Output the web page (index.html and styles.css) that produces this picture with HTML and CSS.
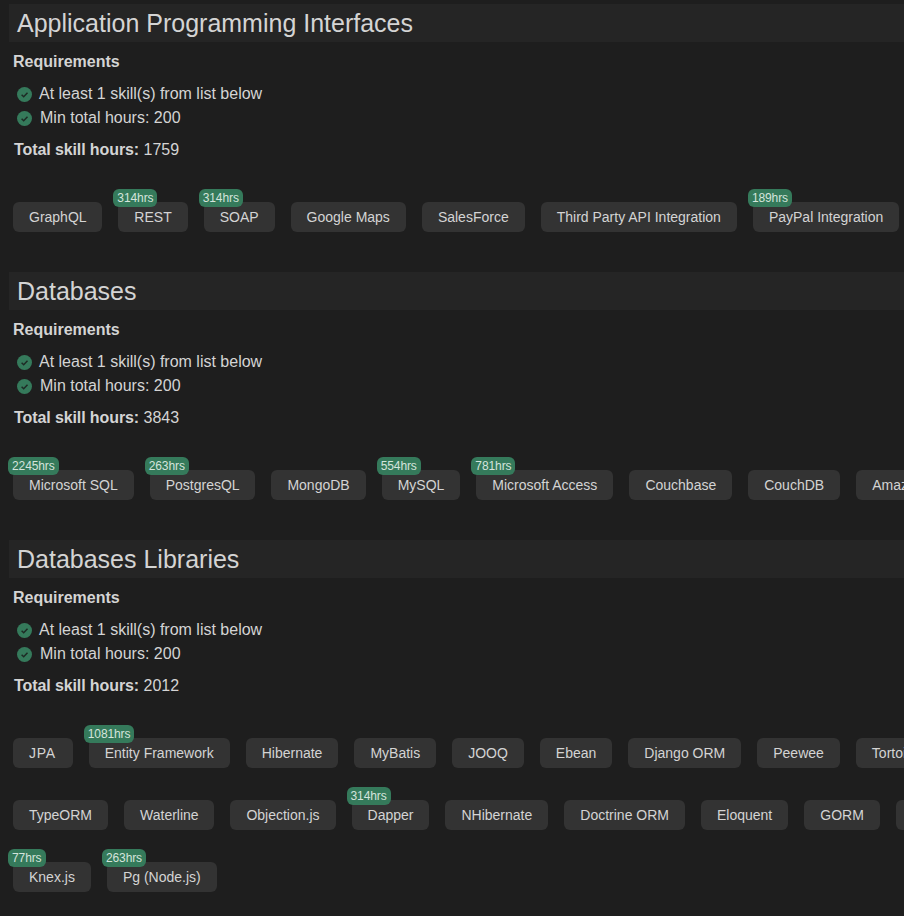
FILE: index.html
```html
<!DOCTYPE html>
<html lang="en">
<head>
  <meta charset="UTF-8">
  <title>Skills</title>
  <link rel="stylesheet" href="styles.css">
</head>
<body>
  <svg class="defs" width="0" height="0">
    <symbol id="check" viewBox="0 0 15 15">
      <circle cx="7.5" cy="7.5" r="7.5" fill="#357a5b"/>
      <path d="M4.6 7.7l2.1 2.1 3.8-4" fill="none" stroke="#1e2a25" stroke-width="1.5"/>
    </symbol>
  </svg>

  <div class="page">
    <section class="group">
      <h2>Application Programming Interfaces</h2>
      <h4>Requirements</h4>
      <ul class="reqs">
        <li><svg class="tick"><use href="#check"/></svg>At least 1 skill(s) from list below</li>
        <li><svg class="tick"><use href="#check"/></svg>Min total hours: 200</li>
      </ul>
      <p class="total"><b>Total skill hours:</b> 1759</p>
      <div class="chips">
        <span class="chip tight">GraphQL</span>
        <span class="chip">REST<span class="hrs">314hrs</span></span>
        <span class="chip">SOAP<span class="hrs">314hrs</span></span>
        <span class="chip">Google Maps</span>
        <span class="chip">SalesForce</span>
        <span class="chip">Third Party API Integration</span>
        <span class="chip">PayPal Integration<span class="hrs">189hrs</span></span>
      </div>
    </section>

    <section class="group">
      <h2>Databases</h2>
      <h4>Requirements</h4>
      <ul class="reqs">
        <li><svg class="tick"><use href="#check"/></svg>At least 1 skill(s) from list below</li>
        <li><svg class="tick"><use href="#check"/></svg>Min total hours: 200</li>
      </ul>
      <p class="total"><b>Total skill hours:</b> 3843</p>
      <div class="chips">
        <span class="chip">Microsoft SQL<span class="hrs">2245hrs</span></span>
        <span class="chip tight">PostgresQL<span class="hrs">263hrs</span></span>
        <span class="chip">MongoDB</span>
        <span class="chip">MySQL<span class="hrs">554hrs</span></span>
        <span class="chip">Microsoft Access<span class="hrs">781hrs</span></span>
        <span class="chip">Couchbase</span>
        <span class="chip">CouchDB</span>
        <span class="chip">Amazon RDS</span>
      </div>
    </section>

    <section class="group">
      <h2>Databases Libraries</h2>
      <h4>Requirements</h4>
      <ul class="reqs">
        <li><svg class="tick"><use href="#check"/></svg>At least 1 skill(s) from list below</li>
        <li><svg class="tick"><use href="#check"/></svg>Min total hours: 200</li>
      </ul>
      <p class="total"><b>Total skill hours:</b> 2012</p>
      <div class="chips">
        <span class="chip wide">JPA</span>
        <span class="chip">Entity Framework<span class="hrs">1081hrs</span></span>
        <span class="chip">Hibernate</span>
        <span class="chip">MyBatis</span>
        <span class="chip">JOOQ</span>
        <span class="chip">Ebean</span>
        <span class="chip">Django ORM</span>
        <span class="chip">Peewee</span>
        <span class="chip">Tortoise ORM</span>
        <span class="chip">TypeORM</span>
        <span class="chip tight">Waterline</span>
        <span class="chip">Objection.js</span>
        <span class="chip">Dapper<span class="hrs">314hrs</span></span>
        <span class="chip">NHibernate</span>
        <span class="chip">Doctrine ORM</span>
        <span class="chip">Eloquent</span>
        <span class="chip">GORM</span>
        <span class="chip">Sequelize</span>
        <span class="chip">Knex.js<span class="hrs">77hrs</span></span>
        <span class="chip">Pg (Node.js)<span class="hrs">263hrs</span></span>
      </div>
    </section>
  </div>
</body>
</html>
```

FILE: styles.css
```css
html, body { margin: 0; height: 916px; overflow: hidden; background: #1e1e1e; }
body { font-family: "Liberation Sans", Arial, sans-serif; font-size: 16px; color: #d4d4d4; }
.defs { position: absolute; }
.page { width: 1000px; padding: 4px 0 0 9px; }
.group { margin-bottom: 40px; }
h2 { margin: 0; height: 38px; line-height: 39px; padding-left: 8px; background: #252525; font-size: 25px; font-weight: normal; color: #d4d4d4; }
h4 { margin: 11px 0 0 4px; line-height: 18px; font-size: 16px; font-weight: bold; }
.reqs { list-style: none; margin: 11px 0 0 8px; padding: 0; }
.reqs li { display: flex; align-items: center; height: 24px; }
.reqs li + li .tick { margin-right: 8px; }
.tick { width: 15px; height: 15px; margin-right: 7px; }
.total { margin: 11px 0 0 5px; line-height: 18px; }
.total b { letter-spacing: -0.1px; }
.chips { display: flex; flex-wrap: wrap; gap: 32px 16px; margin: 43px 0 0 4px; }
.chip { position: relative; height: 30px; line-height: 30px; padding: 0 16px; background: #333; border-radius: 6px; font-size: 14px; white-space: nowrap; }
.chip.tight { padding-right: 15.75px; }
.chip.wide { padding: 0 17px 0 16px; letter-spacing: 0.7px; }
.hrs { position: absolute; left: -5px; top: -13px; height: 18px; line-height: 18px; padding: 0 4px; background: #357a5b; border-radius: 6px; font-size: 12px; letter-spacing: -0.1px; color: #d4e4dc; }
```
